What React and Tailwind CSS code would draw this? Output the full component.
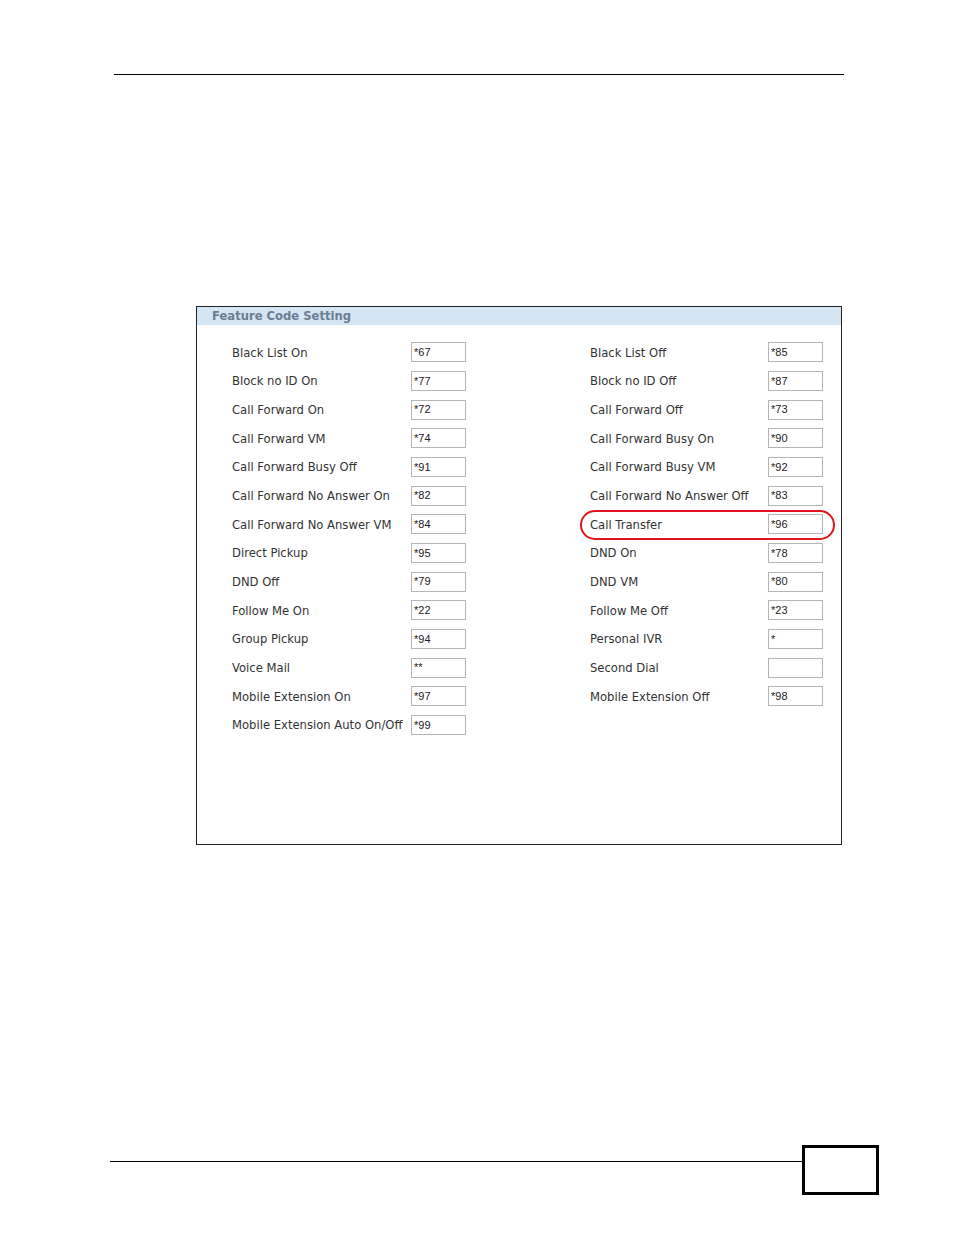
import React from 'react';

const left = [
  ['Black List On', '*67'],
  ['Block no ID On', '*77'],
  ['Call Forward On', '*72'],
  ['Call Forward VM', '*74'],
  ['Call Forward Busy Off', '*91'],
  ['Call Forward No Answer On', '*82'],
  ['Call Forward No Answer VM', '*84'],
  ['Direct Pickup', '*95'],
  ['DND Off', '*79'],
  ['Follow Me On', '*22'],
  ['Group Pickup', '*94'],
  ['Voice Mail', '**'],
  ['Mobile Extension On', '*97'],
  ['Mobile Extension Auto On/Off', '*99'],
];

const right = [
  ['Black List Off', '*85'],
  ['Block no ID Off', '*87'],
  ['Call Forward Off', '*73'],
  ['Call Forward Busy On', '*90'],
  ['Call Forward Busy VM', '*92'],
  ['Call Forward No Answer Off', '*83'],
  ['Call Transfer', '*96'],
  ['DND On', '*78'],
  ['DND VM', '*80'],
  ['Follow Me Off', '*23'],
  ['Personal IVR', '*'],
  ['Second Dial', ''],
  ['Mobile Extension Off', '*98'],
];

function Row({ label, value, labelWidth }) {
  return (
    <div className="flex items-center h-[28.67px]">
      <div
        className="text-[11.6px] text-[#333] whitespace-nowrap pt-[2px]"
        style={{ width: labelWidth }}
      >
        {label}
      </div>
      <div className="w-[55px] h-[20px] border border-[#b5b5b5] bg-white flex items-center pl-[2px] text-[11px] text-[#222] font-['Liberation_Sans',Arial,sans-serif]">
        {value}
      </div>
    </div>
  );
}

export default function App() {
  return (
    <div className="relative w-[954px] h-[1235px] bg-white font-['DejaVu_Sans',Verdana,sans-serif]">
      <div className="pt-[74px]">
        <div className="ml-[114px] w-[730px] h-px bg-black" />
      </div>

      <div className="relative ml-[196px] mt-[231px] w-[646px] h-[539px] border border-[#222]">
        <div className="h-[18px] bg-[#d4e6f3] pl-[15px] text-[11.6px] font-bold text-[#6b7d90] leading-[18px]">
          Feature Code Setting
        </div>
        <div className="flex pl-[35px] pt-[13px]">
          <div className="w-[358px]">
            {left.map(([l, v]) => (
              <Row key={l} label={l} value={v} labelWidth={179} />
            ))}
          </div>
          <div>
            {right.map(([l, v]) => (
              <Row key={l} label={l} value={v} labelWidth={178} />
            ))}
          </div>
        </div>
        <div className="absolute left-[383px] top-[203px] w-[255px] h-[30px] rounded-full border-2 border-[#e0141e]" />
      </div>

      <div className="absolute left-[110px] top-[1145px] flex items-start">
        <div className="w-[692px] h-px bg-black mt-[16px]" />
        <div className="w-[77px] h-[50px] border-[3px] border-black" />
      </div>
    </div>
  );
}
